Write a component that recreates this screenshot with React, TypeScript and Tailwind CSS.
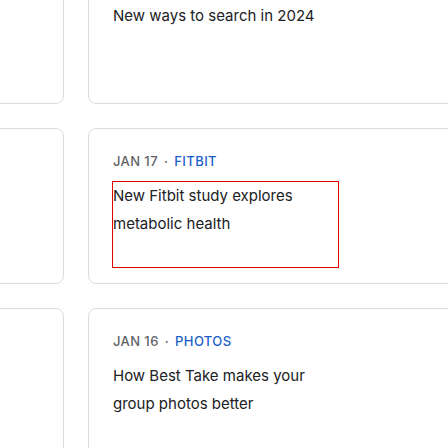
import React from 'react';

interface Story {
  date?: string;
  category?: string;
  title: string;
  outlined?: boolean;
}

const stories: Story[] = [
  { title: 'New ways to search in 2024' },
  { date: 'JAN 17', category: 'FITBIT', title: 'New Fitbit study explores metabolic health', outlined: true },
  { date: 'JAN 16', category: 'PHOTOS', title: 'How Best Take makes your group photos better' },
];

const StoryCard: React.FC<{ story: Story }> = ({ story }) => (
  <div className="flex gap-6 h-[156px]">
    <div className="w-[100px] ml-[-36px] shrink-0 rounded-lg border border-[#dadce0] bg-white" />
    <div className="flex-1 min-w-[400px] rounded-lg border border-[#dadce0] bg-white pt-[23px] pl-6">
      <div className="flex items-center h-5 text-[13px] font-medium tracking-[0.4px]">
        {story.date && (
          <>
            <span className="text-[#5f6368]">{story.date}</span>
            <span className="text-[#5f6368] mx-[6px]">·</span>
            <span className="text-[#1a5fc8]">{story.category}</span>
          </>
        )}
      </div>
      <h3
        className={`mt-[9px] ml-[-1px] w-[227px] h-[87px] border text-[15px] leading-[28px] text-[#202124] font-normal ${
          story.outlined ? 'border-[#e00000]' : 'border-transparent'
        }`}
      >
        {story.title}
      </h3>
    </div>
  </div>
);

export default function App() {
  return (
    <div className="w-[448px] h-[448px] overflow-hidden bg-white" style={{ fontFamily: 'Inter, "Noto Sans", sans-serif' }}>
      <div className="mt-[-52px] flex flex-col gap-6">
        {stories.map(s => (
          <StoryCard key={s.title} story={s} />
        ))}
      </div>
    </div>
  );
}
